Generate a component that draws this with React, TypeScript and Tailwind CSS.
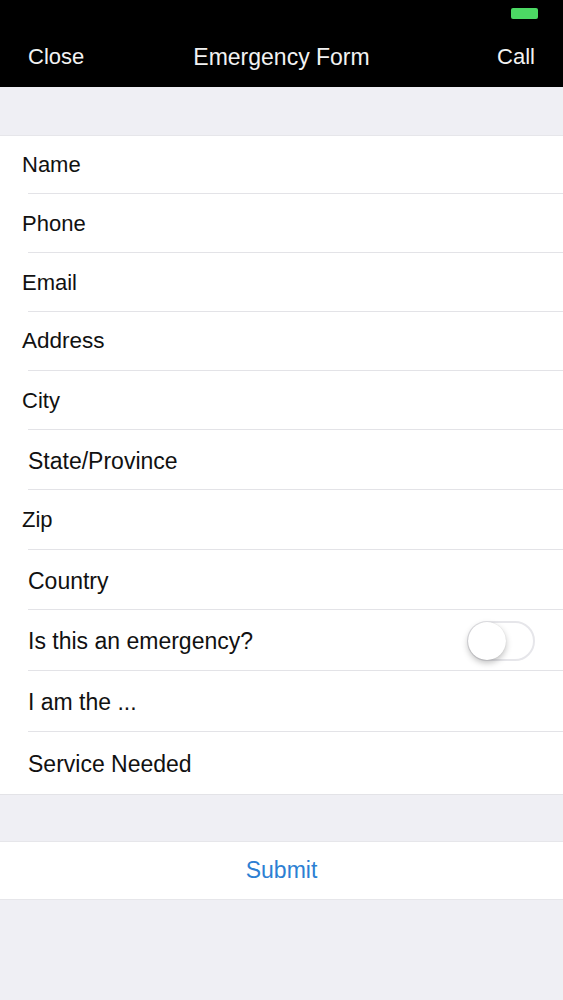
const rows: { label: string; cls: string; h: string; toggle?: boolean }[] = [
  { label: "Name", cls: "pl-[22px]", h: "h-[58px]" },
  { label: "Phone", cls: "pl-[22px]", h: "h-[59px]" },
  { label: "Email", cls: "pl-[22px]", h: "h-[59px]" },
  { label: "Address", cls: "pl-[22px] text-[22.5px]", h: "h-[59px]" },
  { label: "City", cls: "pl-[22px]", h: "h-[59px]" },
  { label: "State/Province", cls: "pl-[28px] pt-[3px] text-[23px]", h: "h-[60px]" },
  { label: "Zip", cls: "pl-[22px]", h: "h-[60px]" },
  { label: "Country", cls: "pl-[28px] pt-[3px] text-[23px]", h: "h-[60px]" },
  { label: "Is this an emergency?", cls: "pl-[28px] pt-[2px] text-[23px]", h: "h-[61px]", toggle: true },
  { label: "I am the ...", cls: "pl-[28px] pt-[3px] text-[23px]", h: "h-[61px]" },
  { label: "Service Needed", cls: "pl-[28px] pt-[3px] text-[23px]", h: "h-[62px]" },
];

function Toggle() {
  return (
    <div className="relative h-[40px] w-[68px] rounded-full border-2 border-[#e6e6ea] bg-white">
      <div className="absolute left-[-1px] top-[-1px] h-[38px] w-[38px] rounded-full bg-white shadow-[0_3px_6px_rgba(0,0,0,0.25),0_0_1px_rgba(0,0,0,0.15)]" />
    </div>
  );
}

export default function App() {
  return (
    <div className="min-h-[1000px] bg-[#efeff4] font-['Liberation_Sans',Arial,sans-serif] text-[22px] text-[#111]">
      <header className="h-[87px] bg-black text-[#f2f2f2]">
        <div className="flex h-[43px] justify-end pr-[25px] pt-[8px]">
          <div className="h-[11px] w-[27px] rounded-[2px] bg-[#4cd964]" />
        </div>
        <div className="grid h-[28px] grid-cols-[1fr_auto_1fr] items-center px-[28px] leading-[28px]">
          <span>Close</span>
          <span className="text-[23px]">Emergency Form</span>
          <span className="text-right">Call</span>
        </div>
      </header>

      <div className="h-[48px]" />

      <section className="border-t border-[#e6e6ea] bg-white">
        {rows.map((r, i) => (
          <div key={r.label} className={`flex flex-col ${r.h}`}>
            <div className={`flex flex-1 items-center justify-between pr-[28px] ${r.cls}`}>
              <span>{r.label}</span>
              {r.toggle && <Toggle />}
            </div>
            {i < rows.length - 1 && <div className="ml-[28px] h-px bg-[#e3e3e7]" />}
          </div>
        ))}
      </section>

      <div className="h-[47px] border-t border-[#e3e3e7]" />

      <button className="flex h-[59px] w-full items-center justify-center border-y border-[#e6e6ea] bg-white text-[23px] text-[#2d7fd3]">
        Submit
      </button>
    </div>
  );
}
